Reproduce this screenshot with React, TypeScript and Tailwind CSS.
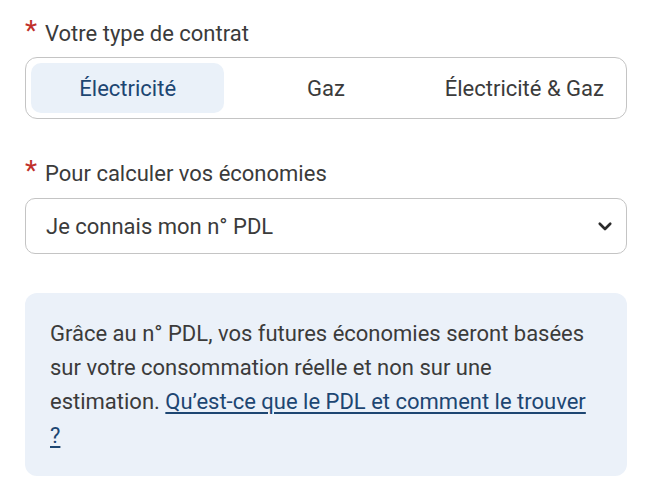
import React, { useState } from 'react';

// Les options du type de contrat
const CONTRATS = ['Électricité', 'Gaz', 'Électricité & Gaz'];

function Label({ children }: { children: React.ReactNode }) {
  return (
    <div className="flex items-center gap-[8px] h-[28px] text-[22px] leading-[28px] text-[#3b3b3b]">
      <span className="text-[#c0302b] text-[28px] leading-none -translate-y-[3px]">*</span>
      <span>{children}</span>
    </div>
  );
}

export default function App() {
  const [contrat, setContrat] = useState(0);

  return (
    <div
      className="w-[652px] h-[500px] bg-white px-[25px] pt-[20px]"
      style={{ fontFamily: 'Roboto, "Noto Sans", sans-serif' }}
    >
      <Label>Votre type de contrat</Label>

      <div className="mt-[9px] grid grid-cols-3 gap-[5px] h-[62px] p-[5px] border border-[#c4c4c4] rounded-[12px]">
        {CONTRATS.map((c, i) => (
          <button
            key={c}
            onClick={() => setContrat(i)}
            className={
              i === contrat
                ? 'rounded-[10px] bg-[#eaf1f9] text-[#1d4672] text-[22px]'
                : 'rounded-[10px] text-[#3b3b3b] text-[22px]'
            }
          >
            {c}
          </button>
        ))}
      </div>

      <div className="mt-[41px]">
        <Label>Pour calculer vos économies</Label>
      </div>

      <div className="mt-[10px] h-[56px] flex items-center justify-between pl-[20px] pr-[12px] border border-[#c4c4c4] rounded-[10px] text-[22px] text-[#3b3b3b]">
        <span>Je connais mon n° PDL</span>
        <svg width="18" height="18" viewBox="0 0 24 24" fill="none" stroke="#2b2b2b" strokeWidth="3.5" strokeLinecap="round" strokeLinejoin="round">
          <path d="M5 9l7 7 7-7" />
        </svg>
      </div>

      <div className="mt-[39px] bg-[#ebf1f9] rounded-[12px] pl-[25px] pr-[30px] pt-[24px] pb-[23px] text-[22px] leading-[34px] text-[#3b3b3b]">
        Grâce au n° PDL, vos futures économies seront basées sur votre consommation réelle et non sur une estimation.{' '}
        <a href="#" className="text-[#1d4672] underline underline-offset-[3px]">
          Qu’est-ce que le PDL et comment le trouver ?
        </a>
      </div>
    </div>
  );
}
